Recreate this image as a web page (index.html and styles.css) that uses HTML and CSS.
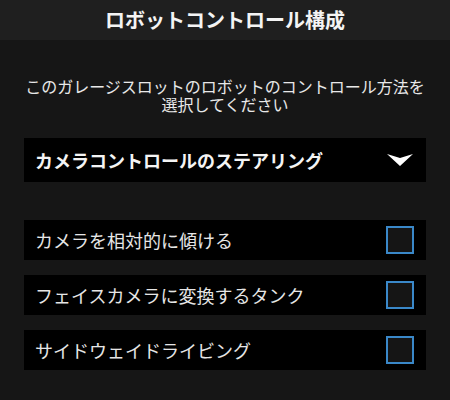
FILE: index.html
```html
<!DOCTYPE html>
<html lang="ja">
<head>
    <meta charset="UTF-8">
    <meta name="viewport" content="width=device-width, initial-scale=1.0">
    <title>ロボットコントロール構成</title>
    <link rel="stylesheet" href="styles.css">
</head>
<body>
    <div class="header">
        <h1>ロボットコントロール構成</h1>
    </div>

    <div class="content">
        <p class="description">このガレージスロットのロボットのコントロール方法を<br>選択してください</p>

        <div class="dropdown">
            <span>カメラコントロールのステアリング</span>
            <svg class="arrow" width="26" height="12" viewBox="0 0 26 12">
                <polygon points="0,0 13,4 26,0 13,12" fill="#ffffff"/>
            </svg>
        </div>

        <div class="options">
            <div class="option">
                <span>カメラを相対的に傾ける</span>
                <span class="checkbox"></span>
            </div>
            <div class="option">
                <span>フェイスカメラに変換するタンク</span>
                <span class="checkbox"></span>
            </div>
            <div class="option">
                <span>サイドウェイドライビング</span>
                <span class="checkbox"></span>
            </div>
        </div>
    </div>
</body>
</html>
```

FILE: styles.css
```css
body {
    font-family: 'Noto Sans CJK JP', 'Noto Sans', sans-serif;
    margin: 0;
    background-color: #161616;
    color: #ececec;
    height: 400px;
}
.header {
    background-color: #1f1f1f;
    height: 40px;
    display: flex;
    align-items: center;
    justify-content: center;
}
h1 {
    margin: 0;
    font-size: 20px;
    font-weight: bold;
    color: #f4f4f4;
    line-height: 1;
}
.content {
    padding: 0 24px;
}
.description {
    margin: 37px 0 0;
    font-size: 16px;
    line-height: 18px;
    text-align: center;
    color: #e8e8e8;
}
.dropdown {
    margin-top: 25px;
    height: 44px;
    background-color: #000;
    display: flex;
    align-items: center;
    justify-content: space-between;
    padding: 0 13px 0 11px;
    font-size: 18px;
    font-weight: bold;
    color: #f4f4f4;
}
.options {
    margin-top: 38px;
    display: flex;
    flex-direction: column;
    gap: 15px;
}
.option {
    height: 40px;
    background-color: #000;
    display: flex;
    align-items: center;
    justify-content: space-between;
    padding: 0 12px 0 11px;
    font-size: 18px;
    color: #e6e6e6;
}
.checkbox {
    width: 24px;
    height: 24px;
    border: 2px solid #3a88c9;
    background-color: #151515;
}
```
